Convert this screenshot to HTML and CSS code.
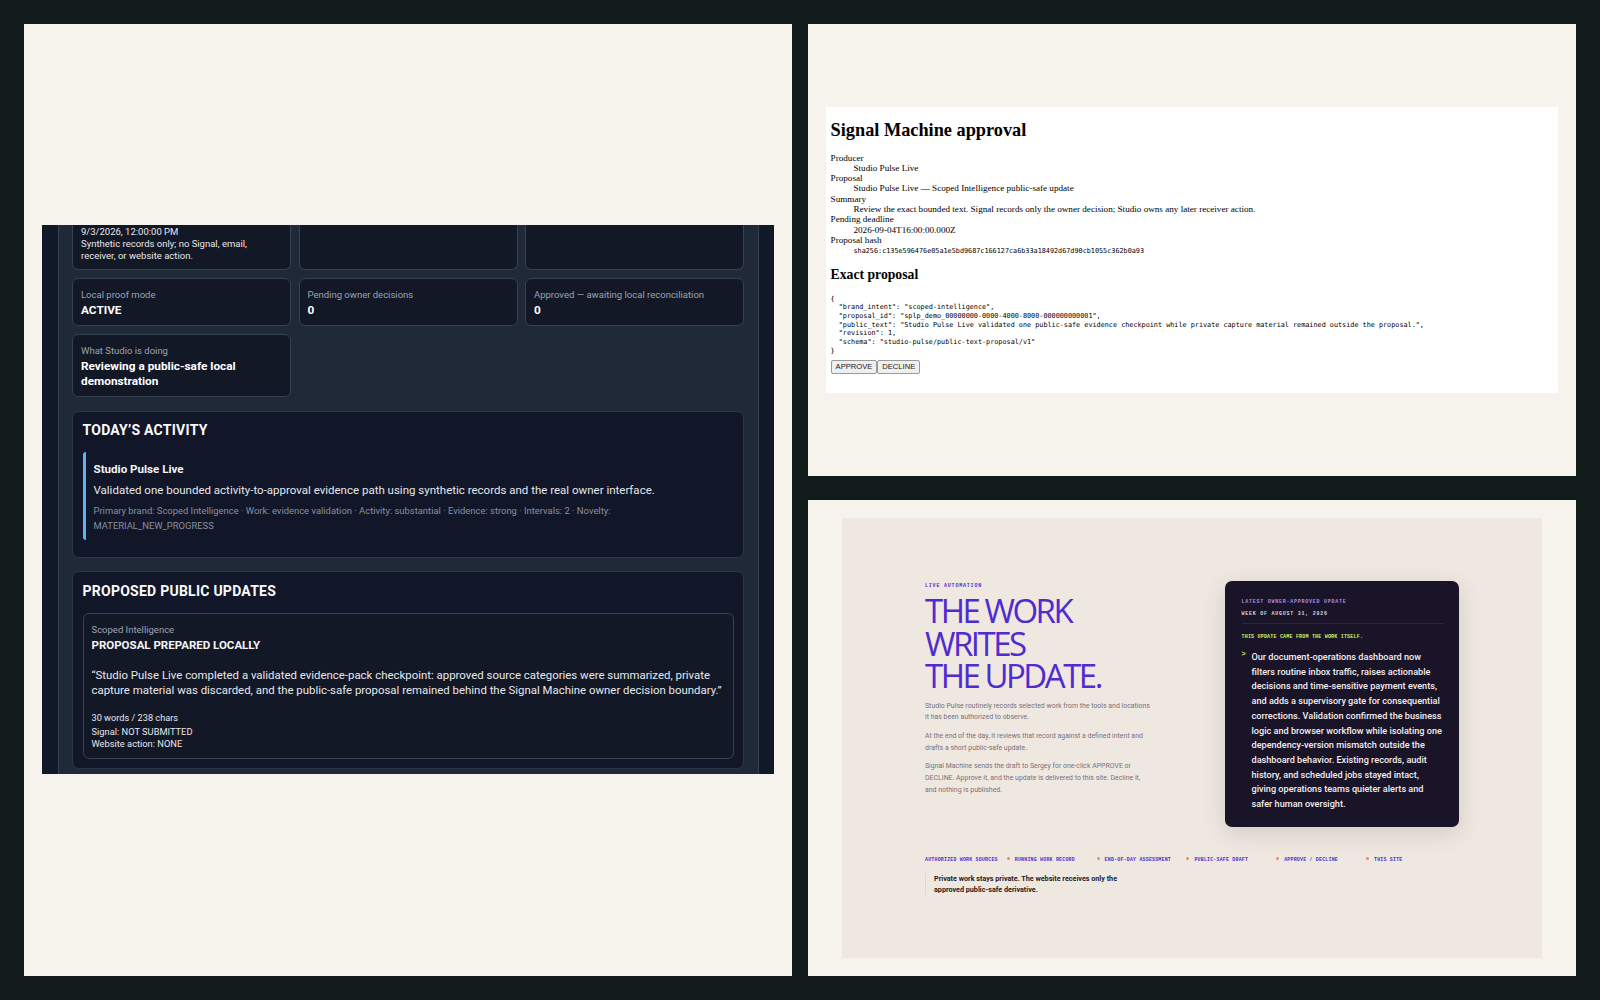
FILE: index.html
```html
<!DOCTYPE html>
<html lang="en">
<head>
<meta charset="utf-8">
<title>Studio Pulse collage</title>
<link rel="stylesheet" href="styles.css">
</head>
<body>
<main class="collage">
  <section class="panel panel-left">
    <div class="dash">
      <div class="dash-col">
        <div class="cards cards-cut">
          <div class="card card-cut">
            <div class="cut-text">9/3/2026, 12:00:00 PM<br>Synthetic records only; no Signal, email, receiver, or website action.</div>
          </div>
          <div class="card"></div>
          <div class="card"></div>
        </div>
        <div class="cards">
          <div class="card"><div class="card-label">Local proof mode</div><div class="card-value">ACTIVE</div></div>
          <div class="card"><div class="card-label">Pending owner decisions</div><div class="card-value">0</div></div>
          <div class="card"><div class="card-label">Approved — awaiting local reconciliation</div><div class="card-value">0</div></div>
        </div>
        <div class="cards">
          <div class="card"><div class="card-label">What Studio is doing</div><div class="card-value">Reviewing a public-safe local demonstration</div></div>
        </div>
        <section class="block block-activity">
          <h2 class="block-title">TODAY’S ACTIVITY</h2>
          <div class="activity">
            <div class="activity-name">Studio Pulse Live</div>
            <p class="activity-text">Validated one bounded activity-to-approval evidence path using synthetic records and the real owner interface.</p>
            <p class="activity-meta">Primary brand: Scoped Intelligence · Work: evidence validation · Activity: substantial · Evidence: strong · Intervals: 2 · Novelty: MATERIAL_NEW_PROGRESS</p>
          </div>
        </section>
        <section class="block block-updates">
          <h2 class="block-title">PROPOSED PUBLIC UPDATES</h2>
          <div class="proposal">
            <div class="card-label">Scoped Intelligence</div>
            <div class="proposal-status">PROPOSAL PREPARED LOCALLY</div>
            <p class="proposal-text">“Studio Pulse Live completed a validated evidence-pack checkpoint: approved source categories were summarized, private capture material was discarded, and the public-safe proposal remained behind the Signal Machine owner decision boundary.”</p>
            <div class="proposal-count">30 words / 238 chars</div>
            <div class="proposal-line">Signal: NOT SUBMITTED</div>
            <div class="proposal-line">Website action: NONE</div>
          </div>
        </section>
      </div>
    </div>
  </section>

  <section class="panel panel-top">
    <div class="approval">
      <h1 class="approval-title">Signal Machine approval</h1>
      <dl class="approval-list">
        <dt>Producer</dt><dd>Studio Pulse Live</dd>
        <dt>Proposal</dt><dd>Studio Pulse Live — Scoped Intelligence public-safe update</dd>
        <dt>Summary</dt><dd>Review the exact bounded text. Signal records only the owner decision; Studio owns any later receiver action.</dd>
        <dt>Pending deadline</dt><dd>2026-09-04T16:00:00.000Z</dd>
        <dt>Proposal hash</dt><dd><code class="approval-hash">sha256:c135e596476e05a1e5bd9687c166127ca6b33a18492d67d90cb1055c362b0a93</code></dd>
      </dl>
      <h2 class="approval-sub">Exact proposal</h2>
      <pre class="approval-json">{
  "brand_intent": "scoped-intelligence",
  "proposal_id": "splp_demo_00000000-0000-4000-8000-000000000001",
  "public_text": "Studio Pulse Live validated one public-safe evidence checkpoint while private capture material remained outside the proposal.",
  "revision": 1,
  "schema": "studio-pulse/public-text-proposal/v1"
}</pre>
      <div class="approval-actions"><button class="approval-btn">APPROVE</button><button class="approval-btn">DECLINE</button></div>
    </div>
  </section>

  <section class="panel panel-bottom">
    <div class="site">
      <div class="hero">
        <div class="hero-copy">
          <div class="eyebrow">LIVE AUTOMATION</div>
          <h2 class="headline">THE WORK<br>WRITES<br>THE UPDATE.</h2>
          <p class="lede">Studio Pulse routinely records selected work from the tools and locations it has been authorized to observe.</p>
          <p class="lede">At the end of the day, it reviews that record against a defined intent and drafts a short public-safe update.</p>
          <p class="lede">Signal Machine sends the draft to Sergey for one-click APPROVE or DECLINE. Approve it, and the update is delivered to this site. Decline it, and nothing is published.</p>
        </div>
        <aside class="update">
          <div class="update-kicker">LATEST OWNER-APPROVED UPDATE</div>
          <div class="update-week">WEEK OF AUGUST 31, 2026</div>
          <div class="update-note">THIS UPDATE CAME FROM THE WORK ITSELF.</div>
          <div class="update-body">
            <span class="update-mark">&gt;</span>
            <p class="update-text">Our document-operations dashboard now filters routine inbox traffic, raises actionable decisions and time-sensitive payment events, and adds a supervisory gate for consequential corrections. Validation confirmed the business logic and browser workflow while isolating one dependency-version mismatch outside the dashboard behavior. Existing records, audit history, and scheduled jobs stayed intact, giving operations teams quieter alerts and safer human oversight.</p>
          </div>
        </aside>
      </div>
      <div class="flow">
        <span class="flow-item">AUTHORIZED WORK SOURCES</span>
        <span class="flow-item"><i class="flow-dot"></i>RUNNING WORK RECORD</span>
        <span class="flow-item"><i class="flow-dot"></i>END-OF-DAY ASSESSMENT</span>
        <span class="flow-item"><i class="flow-dot"></i>PUBLIC-SAFE DRAFT</span>
        <span class="flow-item"><i class="flow-dot"></i>APPROVE / DECLINE</span>
        <span class="flow-item"><i class="flow-dot"></i>THIS SITE</span>
      </div>
      <p class="private-note">Private work stays private. The website receives only the approved public-safe derivative.</p>
    </div>
  </section>
</main>
</body>
</html>
```
FILE: styles.css
```css
* { box-sizing: border-box; }
html, body { margin: 0; height: 100%; }
body { background: #111c1b; overflow: hidden; }

.collage {
  display: grid;
  grid-template-columns: 768px 768px;
  grid-template-rows: 452px 476px;
  column-gap: 16px;
  row-gap: 24px;
  padding: 24px;
  height: 1000px;
}
.panel { background: #f6f3ec; display: flex; justify-content: center; align-items: center; overflow: hidden; }
.panel-left { grid-row: 1 / span 2; padding-bottom: 1px; }

/* dashboard */
.dash {
  width: 732px;
  height: 549px;
  background: #111827;
  padding: 0 15px 0 16px;
  overflow: hidden;
  font-family: Roboto, "Open Sans", sans-serif;
  color: #f3f4f6;
}
.dash-col {
  height: 100%;
  background: #1f2937;
  border-left: 1px solid #374151;
  border-right: 1px solid #374151;
  padding: 0 14px 0 13px;
  display: flex;
  flex-direction: column;
  gap: 8px;
  overflow: hidden;
}
.cards { display: grid; grid-template-columns: repeat(3, 219px); column-gap: 7.5px; flex: none; }
.cards-cut { height: 45px; }
.card {
  background: #131827;
  border: 1px solid #374151;
  border-radius: 6px;
  padding: 9px 8px 7px;
}
.card-cut, .cards-cut .card { border-top: 0; border-top-left-radius: 0; border-top-right-radius: 0; padding: 0 8px 7px; }
.cut-text { font-size: 9.5px; line-height: 12.1px; color: #e5e7eb; }
.cards-cut .card-cut { display: flex; align-items: flex-end; }
.card-label { font-size: 9.5px; line-height: 13px; color: #9ca3af; margin-bottom: 2px; }
.card-value { font-size: 11.8px; line-height: 15px; font-weight: 700; color: #fff; }

.block {
  background: #111628;
  border: 1px solid #2b3648;
  border-radius: 7px;
  padding: 9px 9.5px;
  flex: none;
}
.block-activity { margin-top: 6px; height: 147px; margin-bottom: 5px; }
.block-updates { padding-top: 10px; }
.block-title { margin: 0; font-size: 14px; line-height: 18px; font-weight: 700; letter-spacing: .25px; color: #f9fafb; }
.activity {
  margin-top: 13px;
  border-left: 3px solid #60b4ee;
  border-radius: 3px;
  padding: 9px 8px 7px 8px;
  height: 88px;
}
.activity-name { font-size: 11.6px; line-height: 16px; font-weight: 700; color: #f3f4f6; }
.activity-text { margin: 5px 0 0; font-size: 11.5px; line-height: 16px; color: #e5e7eb; }
.activity-meta { margin: 5px 0 0; font-size: 9.42px; line-height: 15px; color: #8791a1; max-width: 530px; }

.proposal {
  margin-top: 13px;
  background: #131827;
  border: 1px solid #374151;
  border-radius: 6px;
  padding: 9px 8px;
  height: 146px;
}
.proposal-status { font-size: 11.5px; line-height: 15px; font-weight: 700; color: #f3f4f6; }
.proposal-text { margin: 15px 0 13px; font-size: 11.42px; line-height: 15px; color: #e5e7eb; }
.proposal-count { font-size: 9.2px; line-height: 14px; color: #e5e7eb; margin-bottom: 1px; }
.proposal-line { font-size: 9.3px; line-height: 12.4px; color: #e5e7eb; }

/* approval page */
.approval {
  width: 732px;
  height: 286px;
  background: #fff;
  padding: 4.6px;
  font-family: "Liberation Serif", serif;
  font-size: 9.15px;
  line-height: 10.3px;
  color: #000;
}
.approval-title { margin: 8px 0 12px; font-size: 18.3px; line-height: 21px; font-weight: 700; }
.approval-list { margin: 0; }
.approval-list dd { margin: 0 0 0 22.9px; }
.approval-hash { font-family: "DejaVu Sans Mono", monospace; font-size: 6.8px; }
.approval-sub { margin: 10px 0 12px; font-size: 13.7px; line-height: 16px; font-weight: 700; }
.approval-json { margin: 0 0 5px; font-family: "DejaVu Sans Mono", monospace; font-size: 6.8px; line-height: 8.7px; }
.approval-actions { display: flex; }
.approval-btn {
  font-family: "Liberation Sans", sans-serif;
  font-size: 7.6px;
  line-height: 10px;
  padding: 1px 4px;
  background: #efefef;
  border: 1px solid #999;
  border-radius: 2px;
  color: #222;
}

/* public site */
.site {
  width: 700px;
  height: 440px;
  background: #efe8e1;
  padding: 65px 0 0 83px;
  font-family: Roboto, "Open Sans", sans-serif;
}
.hero { display: flex; align-items: flex-start; }
.hero-copy { width: 228px; margin-right: 72px; }
.eyebrow { font-family: "Liberation Mono", monospace; font-size: 5px; line-height: 6px; letter-spacing: .8px; font-weight: 700; color: #5030d0; margin-bottom: 6px; }
.headline { margin: 0 0 8px; font-family: "Open Sans", sans-serif; font-size: 33px; line-height: 32.5px; font-weight: 400; letter-spacing: -2.5px; color: #4f2bd0; }
.lede { margin: 0 0 7px; font-size: 6.95px; line-height: 11.7px; color: #7b7077; }
.update {
  margin-top: -2px;
  width: 234px;
  height: 246px;
  background: #1a1428;
  border-radius: 7px;
  padding: 18px 16px 17px 16.5px;
  box-shadow: 0 6px 22px rgba(60, 45, 40, .16);
}
.update-kicker { font-family: "Liberation Mono", monospace; font-size: 5px; line-height: 7px; font-weight: 700; letter-spacing: .75px; color: #a78bf0; }
.update-week { margin-top: 5px; font-family: "Liberation Mono", monospace; font-size: 5px; line-height: 7px; font-weight: 700; letter-spacing: .75px; color: #d9d4dc; padding-bottom: 5px; border-bottom: 1px solid #2c2638; }
.update-note { margin-top: 10px; font-family: "Liberation Mono", monospace; font-size: 5px; line-height: 7px; font-weight: 700; letter-spacing: .2px; color: #cdf15f; }
.update-body { display: flex; margin-top: 9px; }
.update-mark { width: 10px; flex: none; font-family: "Liberation Mono", monospace; font-size: 7px; line-height: 9px; font-weight: 700; color: #cdf15f; }
.update-text { margin: 0; font-size: 9.15px; line-height: 14.7px; font-weight: 500; color: #f2eef0; }
.flow {
  margin-top: 29px;
  display: grid;
  grid-template-columns: repeat(6, 89.8px);
  white-space: nowrap;
}
.flow-item { font-family: "Liberation Mono", monospace; font-size: 4.95px; line-height: 8px; font-weight: 700; letter-spacing: .2px; color: #5030d0; display: block; }
.flow-dot { display: inline-block; width: 3px; height: 3px; border-radius: 50%; background: #e88a68; margin-left: -8px; margin-right: 5px; vertical-align: 1px; }
.private-note {
  margin: 9px 0 0;
  width: 205px;
  border-left: 1px solid #cdf15f;
  padding-left: 8px;
  font-size: 7.2px;
  line-height: 11px;
  font-weight: 700;
  color: #1f1a24;
}
```
